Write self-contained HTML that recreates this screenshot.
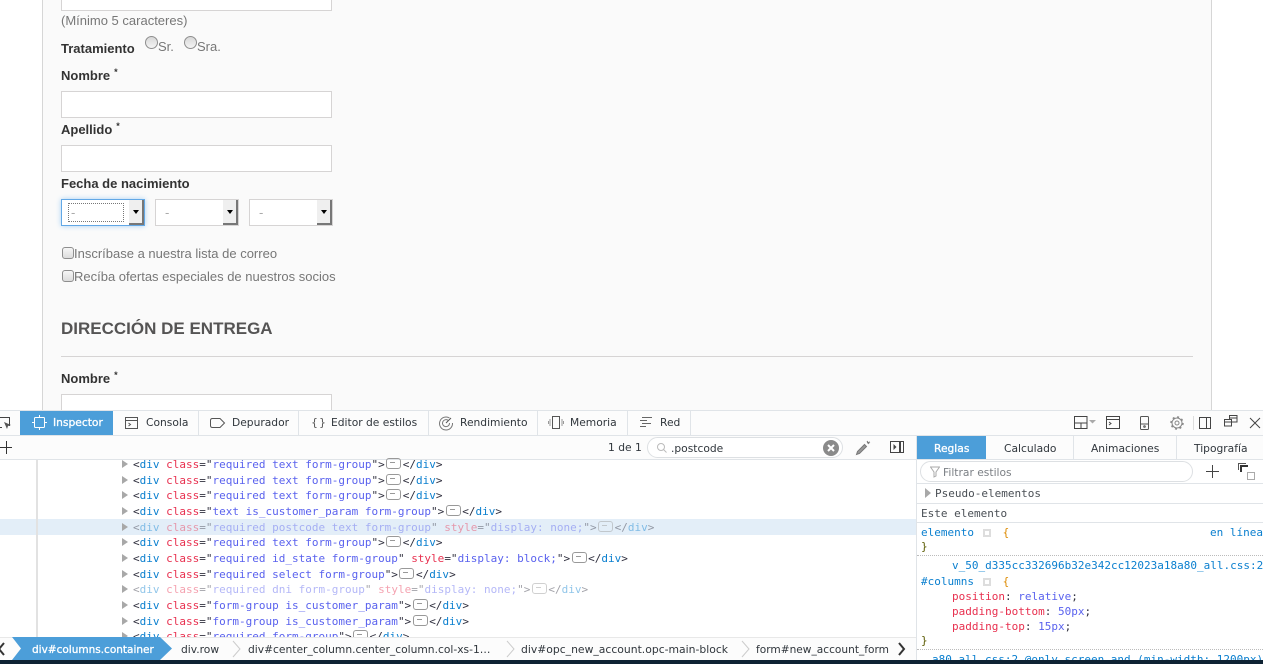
<!DOCTYPE html>
<html><head><meta charset="utf-8"><style>
html,body{margin:0;padding:0;width:1263px;height:664px;overflow:hidden;background:#fff}
div,span,svg{box-sizing:border-box}
.a{position:absolute}
#stage{position:relative;width:1263px;height:664px;overflow:hidden;background:#fff;font-family:"Liberation Sans",sans-serif}
.inp{position:absolute;background:#fff;border:1px solid #d6d4d4;left:61px;width:271px;height:27px}
.lb{position:absolute;left:61px;font:bold 13px/16px "Liberation Sans",sans-serif;color:#333;white-space:nowrap}
.lb sup{font-size:9px;line-height:0;margin-left:4px;vertical-align:5px}
.tx{position:absolute;font:13px/16px "Liberation Sans",sans-serif;color:#777;white-space:nowrap}
.sel{position:absolute;top:199px;width:84px;height:27px;background:#fff;border:1px solid #d6d4d4}
.sel .d{position:absolute;left:9px;top:3px;font:13px/20px "Liberation Sans",sans-serif;color:#aaa}
.sel .b{position:absolute;right:0;top:0;width:15px;height:25px;background:#efefef;border-right:2px solid #777;border-bottom:2px solid #777}
.sel .b:after{content:"";position:absolute;left:4px;top:10px;border:3px solid transparent;border-top:4px solid #000;border-bottom:0}
.rad{position:absolute;width:13px;height:13px;border-radius:50%;border:1px solid #8e8e8e;background:linear-gradient(#d8d8d8,#f4f4f4)}
.chk{position:absolute;left:62px;width:12px;height:12px;border-radius:3px;border:1px solid #8e8e8e;background:linear-gradient(#f6f6f6,#dcdcdc)}
.ui{position:absolute;font:10.7px/14px "DejaVu Sans",sans-serif;color:#30363c;white-space:nowrap}
.wh{color:#fff;-webkit-text-stroke:.3px #fff}
.tab{position:absolute;top:411px;height:24px;border-right:1px solid #e0e4e8}
.r{position:absolute;left:133px;margin-top:1px;font:11px/14px "DejaVu Sans Mono",monospace;color:#30303f;white-space:pre}
.ar{position:absolute;left:122px;width:0;height:0;border-left:6px solid #a8a8a8;border-top:4.5px solid transparent;border-bottom:4.5px solid transparent}
.r i{font-style:normal;color:#0a7fcf}.r b{font-weight:normal;color:#e8304f}.r u{text-decoration:none;color:#5a62ee}
.r em{font-style:normal;display:inline-block;width:13px;height:9px;border:1px solid #999;border-radius:3px;margin:0 1.5px;vertical-align:-1px;position:relative}
.r em:after{content:"";position:absolute;left:3px;top:3px;width:5px;height:1px;background:#999}
.dim{opacity:.45}
.m{position:absolute;margin-top:1px;font:11px/14px "DejaVu Sans Mono",monospace;color:#30303f;white-space:pre}
.m i{font-style:normal;color:#0a7fcf}.m b{font-weight:normal;color:#e8304f}.m u{text-decoration:none;color:#5a62ee}
.sq{display:inline-block;width:8px;height:8px;border:2px solid #ddd;margin:0 5px 0 9px;vertical-align:-1px}
.hl{position:absolute;height:1px;background:#e0e4e8}
.dot{position:absolute;left:917px;width:346px;height:0;border-top:1px dotted #bbb}
</style></head><body><div id="stage">

<div class="a" style="left:42px;top:0;width:1170px;height:411px;background:#fafafa;border-left:1px solid #d6d6d6;border-right:1px solid #d6d6d6"></div>

<div class="inp" style="top:-16px"></div>
<div class="tx" style="left:61px;top:13px">(Mínimo 5 caracteres)</div>
<div class="lb" style="top:41px">Tratamiento</div>
<div class="rad" style="left:145px;top:36px"></div><div class="tx" style="left:158px;top:39px">Sr.</div>
<div class="rad" style="left:184px;top:36px"></div><div class="tx" style="left:197px;top:39px">Sra.</div>
<div class="lb" style="top:68px">Nombre<sup>*</sup></div>
<div class="inp" style="top:91px"></div>
<div class="lb" style="top:122px">Apellido<sup>*</sup></div>
<div class="inp" style="top:145px"></div>
<div class="lb" style="top:176px">Fecha de nacimiento</div>

<div class="sel" style="left:61px;border-color:#62a8e6;box-shadow:0 0 5px #a9d2f5"><div class="a" style="left:6px;top:3px;width:56px;height:19px;border:1px dotted #777"></div><div class="d">-</div><div class="b"></div></div>
<div class="sel" style="left:155px"><div class="d">-</div><div class="b"></div></div>
<div class="sel" style="left:249px"><div class="d">-</div><div class="b"></div></div>

<div class="chk" style="top:247px"></div><div class="tx" style="left:74px;top:246px">Inscríbase a nuestra lista de correo</div>
<div class="chk" style="top:270px"></div><div class="tx" style="left:74px;top:269px">Recíba ofertas especiales de nuestros socios</div>

<div class="a" style="left:61px;top:317px;font:bold 17px/24px 'Liberation Sans',sans-serif;color:#555454;white-space:nowrap">DIRECCIÓN DE ENTREGA</div>
<div class="a" style="left:61px;top:356px;width:1132px;height:1px;background:#d6d4d4"></div>
<div class="lb" style="top:371px">Nombre<sup>*</sup></div>
<div class="inp" style="top:394px;height:30px"></div>

<!-- devtools -->
<div class="a" style="left:0;top:410px;width:1263px;height:254px;background:#fff"></div>
<div class="a" style="left:0;top:411px;width:1263px;height:49px;background:#fcfcfc"></div>
<div class="hl" style="left:0;top:410px;width:1263px"></div>
<div class="hl" style="left:0;top:435px;width:1263px"></div>
<div class="hl" style="left:0;top:459px;width:917px"></div>

<svg class="a" style="left:0;top:414px" width="12" height="18" fill="none" stroke="#444"><path d="M-2 3.5H9.5V12M-2 13.5H2"/><path d="M4 8l7 3-3 1-1 3z" fill="#555" stroke="none"/></svg>
<div class="a" style="left:20px;top:411px;width:93px;height:24px;background:#4c9ed9"></div>
<svg class="a" style="left:32px;top:415px" width="15" height="15" fill="none" stroke="#fff"><rect x="2.5" y="2.5" width="10" height="10" rx="1"/><path d="M7.5 0v2M7.5 13v2M0 7.5h2M13 7.5h2"/></svg>
<div class="ui wh" style="left:53px;top:416px">Inspector</div>
<div class="tab" style="left:113px;width:86px"></div>
<svg class="a" style="left:125px;top:416px" width="14" height="14" fill="none" stroke="#555"><rect x=".5" y="1.5" width="12" height="11"/><path d="M.5 4.5h12M3.5 7l2 1.5-2 1.5"/></svg>
<div class="ui" style="left:146px;top:416px">Consola</div>
<div class="tab" style="left:199px;width:100px"></div>
<svg class="a" style="left:210px;top:417px" width="16" height="12" fill="none" stroke="#555"><path d="M2.5 1.5H10L14.5 6 10 10.5H2.500Q.5 10.500 .5 8.500V3.500Q.5 1.500 2.500 1.500Z"/></svg>
<div class="ui" style="left:232px;top:416px">Depurador</div>
<div class="tab" style="left:299px;width:130px"></div>
<div class="ui" style="left:311px;top:416px;font-size:11px;color:#555">{</div>
<div class="ui" style="left:319px;top:416px;font-size:11px;color:#555">}</div>
<div class="ui" style="left:331px;top:416px">Editor de estilos</div>
<div class="tab" style="left:429px;width:109px"></div>
<svg class="a" style="left:438px;top:415px" width="16" height="16" fill="none" stroke="#777"><path d="M11.500 3A6.500 6.500 0 1 0 14.500 8M10 5.300A3.500 3.500 0 1 0 11.500 8"/><path d="M8 8l5-5" stroke="#555"/></svg>
<div class="ui" style="left:460px;top:416px">Rendimiento</div>
<div class="tab" style="left:538px;width:90px"></div>
<svg class="a" style="left:548px;top:415px" width="16" height="15" fill="none" stroke="#555"><rect x="4.500" y="1.500" width="7" height="12"/><path d="M2 4v7M14 4v7M.5 6v3M15.500 6v3" stroke="#999"/></svg>
<div class="ui" style="left:570px;top:416px">Memoria</div>
<div class="tab" style="left:628px;width:63px"></div>
<svg class="a" style="left:639px;top:416px" width="14" height="14" stroke="#666"><path d="M3 1.500h10M1 4.500h7M3 7.500h9M1 10.500h6"/></svg>
<div class="ui" style="left:660px;top:416px">Red</div>

<svg class="a" style="left:1074px;top:416px" width="24" height="14" fill="none" stroke="#444"><rect x=".5" y=".5" width="12.500" height="12"/><path d="M.5 7h12.500M7 7v5.500"/><path d="M15 4h7l-3.500 3.500z" fill="#aaa" stroke="none"/></svg>
<svg class="a" style="left:1106px;top:416px" width="14" height="14" fill="none" stroke="#444"><rect x=".5" y=".5" width="13" height="12"/><path d="M.5 3.500h13M3 6l2 1.500L3 9"/></svg>
<svg class="a" style="left:1139px;top:416px" width="12" height="15" fill="none" stroke="#555"><rect x="1.500" y=".5" width="8" height="13" rx="1"/><path d="M1.500 8h8"/><circle cx="5.500" cy="10.500" r=".8"/></svg>
<svg class="a" style="left:1170px;top:416px" width="14" height="14" fill="none" stroke="#888"><circle cx="7" cy="7" r="2"/><circle cx="7" cy="7" r="5" stroke-width="1"/><circle cx="7" cy="7" r="6" stroke-dasharray="2 2.700" stroke-width="1.500"/></svg>
<div class="a" style="left:1193px;top:416px;width:1px;height:14px;background:#ddd"></div>
<svg class="a" style="left:1199px;top:416px" width="13" height="13" fill="none" stroke="#444"><rect x=".5" y="1.500" width="11" height="11"/><path d="M7.500 1.500v11"/></svg>
<svg class="a" style="left:1224px;top:415px" width="14" height="14" fill="none" stroke="#444"><rect x="5.500" y=".5" width="7.500" height="6.500"/><path d="M5.500 3h7.500"/><rect x=".5" y="4.500" width="7" height="6.500" fill="#fcfcfc"/><path d="M.5 7h7"/></svg>
<svg class="a" style="left:1249px;top:417px" width="12" height="12" stroke="#444"><path d="M1 1l10 10M11 1L1 11"/></svg>

<svg class="a" style="left:0;top:440px" width="12" height="14" stroke="#333"><path d="M0 7.500h12M6.500 1v13"/></svg>
<div class="ui" style="left:608px;top:441px">1 de 1</div>
<div class="a" style="left:647px;top:437px;width:196px;height:21px;border:1px solid #dde0e3;border-radius:11px;background:#fff"></div>
<svg class="a" style="left:656px;top:442px" width="12" height="12" fill="none" stroke="#bbb"><circle cx="5" cy="5" r="3.500"/><path d="M7.500 7.500l3 3"/></svg>
<div class="ui" style="left:671px;top:442px">.postcode</div>
<svg class="a" style="left:823px;top:440px" width="16" height="16"><circle cx="8" cy="8" r="8" fill="#8a8a8a"/><path d="M5 5l6 6M11 5l-6 6" stroke="#fff" stroke-width="2"/></svg>
<svg class="a" style="left:855px;top:440px" width="16" height="16" fill="none" stroke="#777"><path d="M1.500 14.500l1-3 7-7 2 2-7 7z" fill="#999"/><path d="M12 1l2 3M15 2l-3 1"/></svg>
<svg class="a" style="left:890px;top:441px" width="14" height="13" fill="none" stroke="#444"><rect x=".5" y=".5" width="13" height="11"/><path d="M10 .5v11" stroke-width="2"/><path d="M3.500 3l3 3-3 3z" fill="#444" stroke="none"/></svg>

<!-- splitter/tabs right -->
<div class="a" style="left:916px;top:436px;width:1px;height:224px;background:#e0e4e8"></div>
<div class="a" style="left:917px;top:436px;width:69px;height:23px;background:#4c9ed9"></div>
<div class="ui wh" style="left:934px;top:442px">Reglas</div>
<div class="a" style="left:1073px;top:436px;width:1px;height:23px;background:#e0e4e8"></div>
<div class="a" style="left:1176px;top:436px;width:1px;height:23px;background:#e0e4e8"></div>
<div class="ui" style="left:1004px;top:442px">Calculado</div>
<div class="ui" style="left:1091px;top:442px">Animaciones</div>
<div class="ui" style="left:1194px;top:442px">Tipografía</div>
<div class="hl" style="left:917px;top:459px;width:346px"></div>
<div class="a" style="left:920px;top:461px;width:273px;height:21px;border:1px solid #dde0e3;border-radius:11px;background:#fff"></div>
<svg class="a" style="left:930px;top:466px" width="10" height="12" fill="none" stroke="#aaa"><path d="M.5 1h9L6 6v4L4 11V6z"/></svg>
<div class="ui" style="left:943px;top:466px;color:#7b7f84">Filtrar estilos</div>
<svg class="a" style="left:1205px;top:464px" width="15" height="15" stroke="#444"><path d="M1 7.500h13M7.500 1v13"/></svg>
<svg class="a" style="left:1238px;top:463px" width="18" height="18" fill="none"><path d="M.5 7V.5H8" stroke="#555"/><path d="M3 9V3h7" stroke="#333" stroke-width="2"/><rect x="9.500" y="9.500" width="7" height="7" stroke="#555" stroke-dasharray="1 1"/></svg>
<div class="hl" style="left:917px;top:483px;width:346px"></div>
<div class="a" style="left:925px;top:488px;width:0;height:0;border-left:6px solid #a8a8a8;border-top:5px solid transparent;border-bottom:5px solid transparent"></div>
<div class="m" style="left:935px;top:486px;color:#4a4f55">Pseudo-elementos</div>
<div class="hl" style="left:917px;top:503px;width:346px"></div>
<div class="m" style="left:921px;top:506px;color:#4a4f55">Este elemento</div>
<div class="hl" style="left:917px;top:522px;width:346px"></div>
<div class="m" style="left:921px;top:525px"><i>elemento</i><span class="sq"></span> <span style="color:#dd8a00">{</span></div>
<div class="m" style="left:1210px;top:525px"><i>en línea</i></div>
<div class="m" style="left:921px;top:539px;color:#5a5a00">}</div>
<div class="dot" style="top:555px"></div>
<div class="m" style="left:952px;top:558px"><i>v_50_d335cc332696b32e342cc12023a18a80_all.css:2</i></div>
<div class="m" style="left:921px;top:574px"><i>#columns</i><span class="sq"></span> <span style="color:#dd8a00">{</span></div>
<div class="m" style="left:952px;top:589px"><b>position</b>: <u>relative</u>;</div>
<div class="m" style="left:952px;top:604px"><b>padding-bottom</b>: <u>50px</u>;</div>
<div class="m" style="left:952px;top:619px"><b>padding-top</b>: <u>15px</u>;</div>
<div class="m" style="left:921px;top:633px;color:#5a5a00">}</div>
<div class="dot" style="top:649px"></div>
<div class="m" style="left:932px;top:652px"><i>a80_all.css:2 @only screen and (min-width: 1200px)</i></div>

<!-- markup -->
<div class="a" style="left:0;top:519px;width:916px;height:16px;background:#e3eef8"></div>
<div class="a" style="left:36px;top:460px;width:2px;height:177px;background:#e2e2e2"></div>

<div class="ar" style="top:460px"></div><div class="r" style="top:457px">&lt;<i>div</i> <b>class</b>="<u>required text form-group</u>"&gt;<em></em>&lt;/<i>div</i>&gt;</div>
<div class="ar" style="top:476px"></div><div class="r" style="top:473px">&lt;<i>div</i> <b>class</b>="<u>required text form-group</u>"&gt;<em></em>&lt;/<i>div</i>&gt;</div>
<div class="ar" style="top:491px"></div><div class="r" style="top:488px">&lt;<i>div</i> <b>class</b>="<u>required text form-group</u>"&gt;<em></em>&lt;/<i>div</i>&gt;</div>
<div class="ar" style="top:507px"></div><div class="r" style="top:504px">&lt;<i>div</i> <b>class</b>="<u>text is_customer_param form-group</u>"&gt;<em></em>&lt;/<i>div</i>&gt;</div>
<div class="ar" style="top:523px"></div><div class="r dim" style="top:520px">&lt;<i>div</i> <b>class</b>="<u>required postcode text form-group</u>" <b>style</b>="<u>display: none;</u>"&gt;<em></em>&lt;/<i>div</i>&gt;</div>
<div class="ar" style="top:538px"></div><div class="r" style="top:535px">&lt;<i>div</i> <b>class</b>="<u>required text form-group</u>"&gt;<em></em>&lt;/<i>div</i>&gt;</div>
<div class="ar" style="top:554px"></div><div class="r" style="top:551px">&lt;<i>div</i> <b>class</b>="<u>required id_state form-group</u>" <b>style</b>="<u>display: block;</u>"&gt;<em></em>&lt;/<i>div</i>&gt;</div>
<div class="ar" style="top:570px"></div><div class="r" style="top:567px">&lt;<i>div</i> <b>class</b>="<u>required select form-group</u>"&gt;<em></em>&lt;/<i>div</i>&gt;</div>
<div class="ar" style="top:585px"></div><div class="r dim" style="top:582px">&lt;<i>div</i> <b>class</b>="<u>required dni form-group</u>" <b>style</b>="<u>display: none;</u>"&gt;<em></em>&lt;/<i>div</i>&gt;</div>
<div class="ar" style="top:601px"></div><div class="r" style="top:598px">&lt;<i>div</i> <b>class</b>="<u>form-group is_customer_param</u>"&gt;<em></em>&lt;/<i>div</i>&gt;</div>
<div class="ar" style="top:617px"></div><div class="r" style="top:614px">&lt;<i>div</i> <b>class</b>="<u>form-group is_customer_param</u>"&gt;<em></em>&lt;/<i>div</i>&gt;</div>
<div class="ar" style="top:632px"></div><div class="r" style="top:629px">&lt;<i>div</i> <b>class</b>="<u>required form-group</u>"&gt;<em></em>&lt;/<i>div</i>&gt;</div>

<!-- breadcrumbs -->
<div class="a" style="left:0;top:637px;width:916px;height:23px;background:#fcfcfc;border-top:1px solid #e8e8e8"></div>
<svg class="a" style="left:-3px;top:642px" width="10" height="14" fill="none" stroke="#333" stroke-width="2"><path d="M7 1L2 7l5 6"/></svg>
<svg class="a" style="left:12px;top:637px" width="161" height="23"><path d="M0 0H148L160 11.500 148 23H0L9 11.500Z" fill="#4c9ed9"/></svg>
<div class="ui wh" style="left:32px;top:643px;font-size:10.5px">div#columns.container</div>
<div class="ui" style="left:181px;top:643px">div.row</div>
<svg class="a" style="left:232px;top:640px" width="10" height="18" fill="none" stroke="#ccc"><path d="M1 1l7 8-7 8"/></svg>
<div class="ui" style="left:248px;top:643px">div#center_column.center_column.col-xs-1…</div>
<svg class="a" style="left:506px;top:640px" width="10" height="18" fill="none" stroke="#ccc"><path d="M1 1l7 8-7 8"/></svg>
<div class="ui" style="left:521px;top:643px;font-size:10.8px">div#opc_new_account.opc-main-block</div>
<svg class="a" style="left:741px;top:640px" width="10" height="18" fill="none" stroke="#ccc"><path d="M1 1l7 8-7 8"/></svg>
<div class="ui" style="left:756px;top:643px;font-size:10.6px">form#new_account_form</div>
<svg class="a" style="left:897px;top:642px" width="10" height="14" fill="none" stroke="#333" stroke-width="2"><path d="M2 1l5 6-5 6"/></svg>

<div class="a" style="left:0;top:660px;width:1263px;height:4px;background:#0e2233"></div>
</div></body></html>
